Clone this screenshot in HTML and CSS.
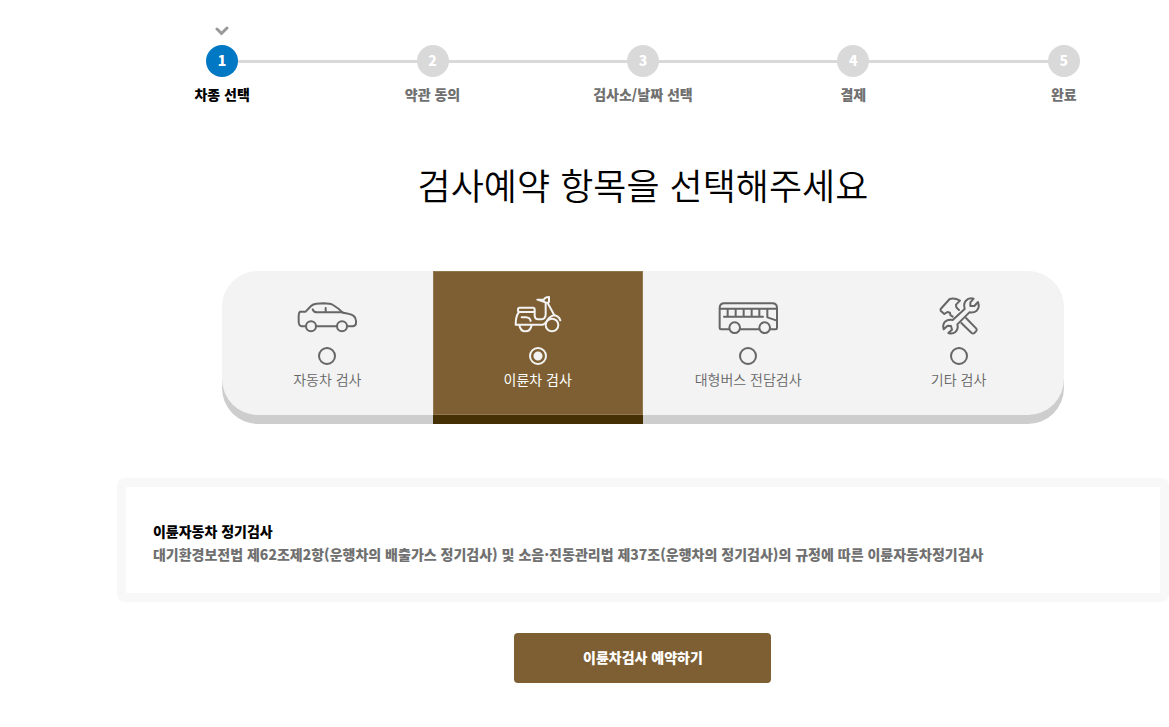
FILE: index.html
```html
<!DOCTYPE html>
<html lang="ko">
<head>
    <meta charset="UTF-8">
    <meta name="viewport" content="width=device-width, initial-scale=1.0">
    <title>검사예약</title>
    <link rel="stylesheet" href="styles.css">
</head>
<body>
<main class="wrap">
    <ol class="steps">
        <li class="on">
            <svg class="check" viewBox="0 0 14 10"><path d="M2 3l4.500 4.500L12 2"/></svg>
            <span class="num">1</span>
            <span class="name">차종 선택</span>
        </li>
        <li>
            <span class="num">2</span>
            <span class="name">약관 동의</span>
        </li>
        <li>
            <span class="num">3</span>
            <span class="name">검사소/날짜 선택</span>
        </li>
        <li>
            <span class="num">4</span>
            <span class="name">결제</span>
        </li>
        <li>
            <span class="num">5</span>
            <span class="name">완료</span>
        </li>
    </ol>

    <h1 class="title">검사예약 항목을 선택해주세요</h1>

    <form>
        <div class="kinds">
            <label class="kind">
                <!-- 자동차 -->
                <svg class="icon" viewBox="0 0 180 120">
                    <path d="M27 91H14Q6 90 5 78V60Q5 50 9 47H26L42 30Q48 24 58 23L80 22Q100 22 108 27Q124 36 137 50Q158 52 169 59Q177 65 177 74V82Q177 89 168 91H150M57 91H120"/>
                    <path d="M47 40Q50 49 60 49H137M86 36V49"/>
                    <circle cx="42" cy="91" r="15"/>
                    <circle cx="135" cy="91" r="15"/>
                </svg>
                <input type="radio" name="kind">
                <span>자동차 검사</span>
            </label>
            <label class="kind">
                <!-- 이륜차 -->
                <svg class="icon" viewBox="0 0 180 120">
                    <rect x="30" y="35" width="50" height="13" rx="5"/>
                    <path d="M33 48Q23 60 23 86H105Q114 82 118 73Q125 61 139 58L119 21"/>
                    <path d="M80 47V60Q81 70 90 70H101Q112 69 113 56V20"/>
                    <path d="M88 11H108Q110 4 123 3V18Q116 23 110 18Z"/>
                    <path d="M139 58Q153 61 157 73M41 64H54Q66 65 68 75"/>
                    <path d="M34 87Q37 106 52 106Q68 106 71 87"/>
                    <circle cx="132" cy="87" r="19"/>
                </svg>
                <input type="radio" name="kind" checked>
                <span>이륜차 검사</span>
            </label>
            <label class="kind">
                <!-- 대형버스 -->
                <svg class="icon" viewBox="0 0 180 120">
                    <path d="M34 100H9Q5 100 5 96V36Q5 22 19 22H163Q177 22 177 36V96Q177 100 173 100H156M66 100H124"/>
                    <path d="M6 38H177M18 62H135M29 38V62M53 38V62M77 38V62M101 38V62M124 38V62M148 38V64L177 74"/>
                    <circle cx="50" cy="95" r="16"/>
                    <circle cx="140" cy="95" r="16"/>
                </svg>
                <input type="radio" name="kind">
                <span>대형버스 전담검사</span>
            </label>
            <label class="kind">
                <!-- 기타 -->
                <svg class="icon" viewBox="0 0 180 120">
                    <path d="M107 39Q103 23 110 15Q119 4 134 8L124 19V30H136L147 18Q153 34 143 44Q135 51 121 49L85 85Q89 99 79 108Q70 115 58 111L69 101L66 90L56 89L44 100Q40 86 48 77Q57 69 71 72Z"/>
                    <path d="M90 42L82 34L81 26L93 14Q77 5 62 9L35 39V44L46 54L55 48L63 50L64 57L71 62"/>
                    <path d="M111 66L142 98Q145 102 141 106L136 111Q132 114 127 110L97 81"/>
                </svg>
                <input type="radio" name="kind">
                <span>기타 검사</span>
            </label>
        </div>

        <section class="info">
            <h2>이륜자동차 정기검사</h2>
            <p>대기환경보전법 제62조제2항(운행차의 배출가스 정기검사) 및 소음·진동관리법 제37조(운행차의 정기검사)의 규정에 따른 이륜자동차정기검사</p>
        </section>

        <button class="submit" type="submit">이륜차검사 예약하기</button>
    </form>
</main>
</body>
</html>
```
FILE: styles.css
```css
* {
    box-sizing: border-box;
    margin: 0;
    padding: 0;
}
body {
    background: #fff;
    color: #000;
    font: 14px/20px "Noto Sans CJK KR", sans-serif;
}
.wrap {
    margin-left: 10%;
    padding: 26px 0 44px;
}

/* 진행 단계 */
.steps {
    display: flex;
    list-style: none;
}
.steps li {
    position: relative;
    display: flex;
    flex: 1;
    flex-direction: column;
    align-items: center;
    padding-top: 19px;
    color: #707070;
    font-weight: 900;
}
.steps .on {
    color: #000;
}
.steps li + li::before {
    content: "";
    position: absolute;
    top: 34px;
    right: 50%;
    width: 100%;
    height: 3px;
    background: #d9d9d9;
}
.check {
    position: absolute;
    top: 0;
    width: 14px;
    height: 10px;
    fill: none;
    stroke: #999;
    stroke-width: 3;
    stroke-linecap: round;
}
.num {
    position: relative;
    z-index: 1;
    width: 32px;
    height: 32px;
    border-radius: 50%;
    background: #d9d9d9;
    color: #fff;
    line-height: 30px;
    text-align: center;
}
.on .num {
    background: #0078c4;
}
.name {
    margin-top: 7px;
}

.title {
    margin: 53px 0 60px;
    font-size: 36px;
    font-weight: 350;
    line-height: 54px;
    text-align: center;
}

/* 검사 종류 */
.kinds {
    display: flex;
    width: 80%;
    margin: 0 auto;
    border-radius: 36px;
    background: #f3f3f3;
    box-shadow: 0 9px #cdcdcd;
}
.kind {
    display: flex;
    flex: 1;
    flex-direction: column;
    align-items: center;
    padding: 25px 0 26px;
    color: #666;
    font-weight: 350;
    cursor: pointer;
}
.kind:has(:checked) {
    background: #7e5f33;
    box-shadow: inset 0 0 0 1px #93774f, 0 9px #453005;
    color: #fff;
    font-weight: 400;
}
.icon {
    width: 60px;
    height: 40px;
    fill: none;
    stroke: #666;
    stroke-width: 6;
    stroke-linecap: round;
    stroke-linejoin: round;
}
.kind:has(:checked) .icon {
    stroke: #f3f3f3;
}
.kind input {
    appearance: none;
    width: 18px;
    height: 18px;
    margin: 11px 0 4px;
    border: 2px solid #666;
    border-radius: 50%;
}
.kind input:checked {
    border-color: #f3f3f3;
    background: radial-gradient(circle, #f3f3f3 4px, transparent 5px);
}

/* 안내 */
.info {
    margin-top: 63px;
    padding: 33px 27px 27px;
    border: 9px solid #f8f8f8;
    border-radius: 8px;
    color: #707070;
    font-weight: 900;
    line-height: 23px;
}
.info h2 {
    color: #000;
    font-size: 14px;
    font-weight: 900;
}

.submit {
    display: block;
    width: 257px;
    height: 50px;
    margin: 31px auto 0;
    padding-bottom: 3px;
    border: 0;
    border-radius: 4px;
    background: #7e5f33;
    color: #fff;
    font: 900 14px/20px "Noto Sans CJK KR", sans-serif;
    cursor: pointer;
}
```
